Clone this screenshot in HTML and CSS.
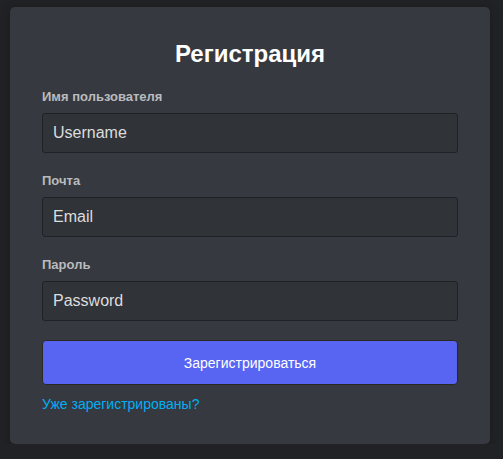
FILE: index.html
```html
<!DOCTYPE html>
<html lang="ru">
<head>
<meta charset="utf-8">
<title>Регистрация</title>
<link rel="stylesheet" href="styles.css">
</head>
<body>
<form class="card">
  <h1 class="title">Регистрация</h1>
  <div class="field">
    <label class="label" for="u">Имя пользователя</label>
    <input class="input" id="u" type="text" placeholder="Username">
  </div>
  <div class="field">
    <label class="label" for="e">Почта</label>
    <input class="input" id="e" type="email" placeholder="Email">
  </div>
  <div class="field">
    <label class="label" for="p">Пароль</label>
    <input class="input" id="p" type="password" placeholder="Password">
  </div>
  <button class="submit" type="button">Зарегистрироваться</button>
  <a class="link" href="#">Уже зарегистрированы?</a>
</form>
</body>
</html>
```
FILE: styles.css
```css
html, body {
  margin: 0;
  background: #202225;
}
body {
  padding: 7px 13px 0 10px;
  font-family: "Liberation Sans", Arial, sans-serif;
}
.card {
  width: 480px;
  box-sizing: border-box;
  background: #36393f;
  border-radius: 5px;
  padding: 32px 32px 32px 32px;
  box-shadow: 0 2px 10px rgba(0, 0, 0, 0.25);
  display: flex;
  flex-direction: column;
}
.title {
  margin: 0 0 20px;
  font-size: 24px;
  line-height: 30px;
  font-weight: 700;
  color: #ffffff;
  text-align: center;
}
.field {
  display: flex;
  flex-direction: column;
  margin-bottom: 20px;
}
.field:nth-of-type(3) {
  margin-bottom: 19px;
}
.label {
  font-size: 13px;
  line-height: 16px;
  font-weight: 700;
  color: #b9bbbe;
  margin-bottom: 8px;
}
.input {
  height: 40px;
  box-sizing: border-box;
  margin: 0;
  padding: 0 10px;
  background: #303338;
  border: 1px solid #1f2124;
  border-radius: 3px;
  font-family: inherit;
  font-size: 16px;
  color: #dcddde;
  outline: none;
}
.input::placeholder {
  color: #dcddde;
  opacity: 1;
}
.submit {
  height: 45px;
  margin: 0;
  background: #5865f2;
  border: 1px solid #2a2920;
  border-radius: 4px;
  color: #ffffff;
  font-family: inherit;
  font-size: 14px;
  cursor: pointer;
}
.link {
  margin-top: 11px;
  font-size: 14px;
  line-height: 16px;
  color: #00aff4;
  text-decoration: none;
  align-self: flex-start;
}
```
